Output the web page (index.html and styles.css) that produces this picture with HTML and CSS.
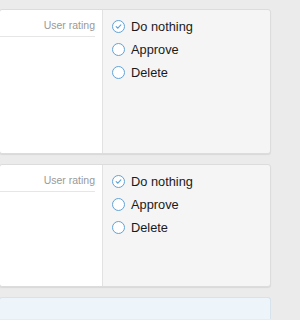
FILE: index.html
```html
<!DOCTYPE html>
<html lang="en">
<head>
  <meta charset="UTF-8">
  <title>Moderation queue</title>
  <meta name="viewport" content="width=device-width, initial-scale=1.0">
  <link rel="stylesheet" href="styles.css">
</head>
<body>

  <div class="queue">

    <div class="queue-item tall">
      <div class="item-main">
        <div class="item-head">User rating</div>
      </div>
      <div class="item-actions">
        <label class="option checked"><span class="radio"><svg viewBox="0 0 12 12"><path d="M3.5 6.2 5.3 7.9 8.6 4.3"/></svg></span>Do nothing</label>
        <label class="option"><span class="radio"></span>Approve</label>
        <label class="option"><span class="radio"></span>Delete</label>
      </div>
    </div>

    <div class="queue-item">
      <div class="item-main">
        <div class="item-head">User rating</div>
      </div>
      <div class="item-actions">
        <label class="option checked"><span class="radio"><svg viewBox="0 0 12 12"><path d="M3.5 6.2 5.3 7.9 8.6 4.3"/></svg></span>Do nothing</label>
        <label class="option"><span class="radio"></span>Approve</label>
        <label class="option"><span class="radio"></span>Delete</label>
      </div>
    </div>

    <div class="queue-note"></div>

  </div>

</body>
</html>
```
FILE: styles.css
```css
body {
  margin: 0;
  background: #ebebeb;
  font-family: 'Liberation Sans', Arial, sans-serif;
  overflow: hidden;
}

.queue {
  width: 272px;
  margin-left: -1px;
  padding-top: 9px;
  display: flex;
  flex-direction: column;
  gap: 10px;
}

.queue-item {
  display: flex;
  box-sizing: border-box;
  height: 123px;
  background: #f5f5f5;
  border: 1px solid #dcdcdc;
  border-radius: 3px;
  box-shadow: 0 1px 1px rgba(0, 0, 0, 0.08);
}

.queue-item.tall {
  height: 145px;
}

.item-main {
  width: 102px;
  background: #fff;
  border-right: 1px solid #e2e2e2;
  border-radius: 3px 0 0 3px;
}

.item-head {
  margin-right: 7px;
  padding: 9px 0 4px;
  border-bottom: 1px solid #e6e6e6;
  text-align: right;
  font-size: 10.5px;
  line-height: 13px;
  color: #999;
}

.item-actions {
  flex: 1;
  padding: 5px 9px 0;
  display: flex;
  flex-direction: column;
}

.option {
  display: flex;
  align-items: center;
  gap: 6px;
  height: 23px;
  font-size: 12.8px;
  color: #1a1a1a;
}

.radio {
  width: 11px;
  height: 11px;
  border: 1.3px solid #5fa3d8;
  border-radius: 50%;
  background: #fff;
  display: flex;
}

.radio svg {
  width: 11px;
  height: 11px;
  fill: none;
  stroke: #5fa3d8;
  stroke-width: 1.2;
  stroke-linecap: round;
  stroke-linejoin: round;
}

.queue-note {
  box-sizing: border-box;
  height: 22px;
  flex: none;
  background: #edf5fa;
  border: 1px solid #d6e3ec;
  border-bottom: none;
  border-radius: 3px 3px 0 0;
}
```
